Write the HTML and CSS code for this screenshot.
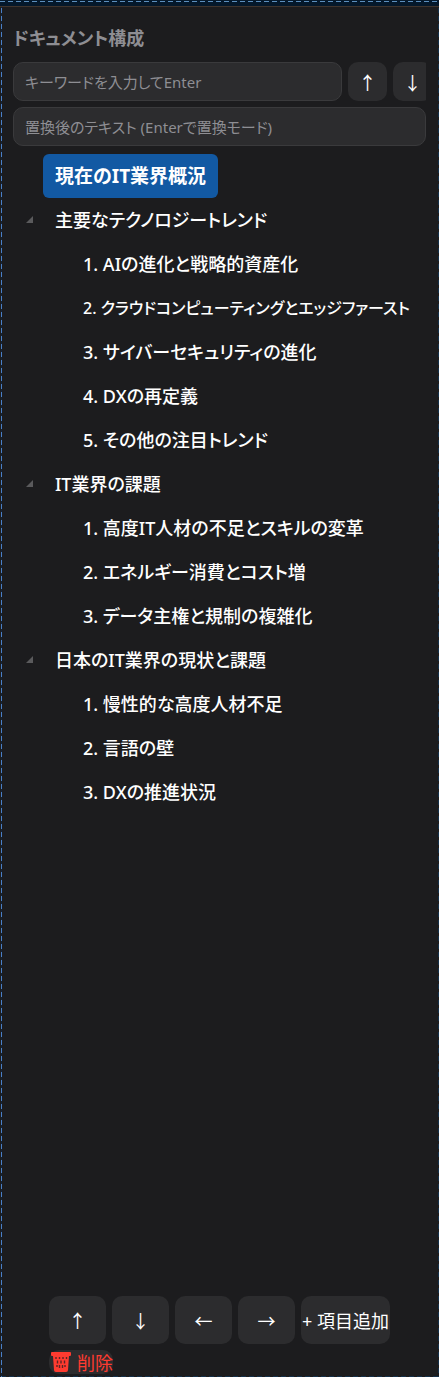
FILE: index.html
```
<!DOCTYPE html>
<html lang="ja">
<head>
    <meta charset="UTF-8">
    <title>ドキュメント構成</title>
    <meta name="viewport" content="width=device-width,initial-scale=1.0">
    <link rel="stylesheet" href="styles.css">
</head>
<body>
<div class="panel">
    <h2 class="title">ドキュメント構成</h2>
    <div class="search">
        <input type="text" class="keyword" placeholder="キーワードを入力してEnter" aria-label="キーワード">
        <button type="button" class="btn" aria-label="前へ">↑</button>
        <button type="button" class="btn" aria-label="次へ">↓</button>
    </div>
    <input type="text" class="replace" placeholder="置換後のテキスト (Enterで置換モード)" aria-label="置換後のテキスト">
    <ul class="tree">
        <li><span class="item selected">現在のIT業界概況</span></li>
        <li class="open">
            <span class="item">主要なテクノロジートレンド</span>
            <ul>
                <li><span class="item">1. AIの進化と戦略的資産化</span></li>
                <li><span class="item long">2. クラウドコンピューティングとエッジファースト</span></li>
                <li><span class="item">3. サイバーセキュリティの進化</span></li>
                <li><span class="item">4. DXの再定義</span></li>
                <li><span class="item">5. その他の注目トレンド</span></li>
            </ul>
        </li>
        <li class="open">
            <span class="item">IT業界の課題</span>
            <ul>
                <li><span class="item">1. 高度IT人材の不足とスキルの変革</span></li>
                <li><span class="item">2. エネルギー消費とコスト増</span></li>
                <li><span class="item">3. データ主権と規制の複雑化</span></li>
            </ul>
        </li>
        <li class="open">
            <span class="item">日本のIT業界の現状と課題</span>
            <ul>
                <li><span class="item">1. 慢性的な高度人材不足</span></li>
                <li><span class="item">2. 言語の壁</span></li>
                <li><span class="item">3. DXの推進状況</span></li>
            </ul>
        </li>
    </ul>
    <div class="tools">
        <button type="button" class="btn" aria-label="上へ移動">↑</button>
        <button type="button" class="btn" aria-label="下へ移動">↓</button>
        <button type="button" class="btn" aria-label="左へ移動">←</button>
        <button type="button" class="btn" aria-label="右へ移動">→</button>
        <button type="button" class="btn add">+ 項目追加</button>
        <button type="button" class="btn delete">
            <svg width="20" height="20" viewBox="0 0 20 20" aria-hidden="true">
                <path d="M1 0h18q1 0 1 1v2q0 1-1 1h-1l-1 14q0 2-2 2H5q-2 0-2-2L2 4H1Q0 4 0 3V1q0-1 1-1z" fill="#ff3b30"/>
                <path d="M5 5v2M8.500 5v2M12 5v2M15.500 5v2M6.500 8.500v3M10 8.500v3M13.500 8.500v3M6 13v2M8.500 13v3M11.500 13v3M14 13v2" stroke="#5c2424" stroke-width="1.400"/>
            </svg>
            削除
        </button>
    </div>
</div>
</body>
</html>
```

FILE: styles.css
```
* {
    margin: 0;
    padding: 0;
    box-sizing: border-box;
}

body {
    background: #1c1c1e;
    color: #fff;
    font-family: "Noto Sans", "Noto Sans CJK JP", sans-serif;
    font-feature-settings: "palt";
    font-size: 18px;
}

.panel {
    position: relative;
    display: flex;
    flex-direction: column;
    min-height: 100vh;
    padding: 24px 13px 3px;
    overflow: hidden;
}

/* ドロップ領域の枠 */
.panel:before {
    content: "";
    position: absolute;
    top: 0;
    right: 0;
    bottom: 0;
    left: 1px;
    background:
        repeating-linear-gradient(180deg, #4a80c8 0 5px, #142438 5px 8px) left / 1px 100% no-repeat,
        repeating-linear-gradient(180deg, #14304a 0 5px, #1c1c1e 5px 8px) right / 1px 100% no-repeat,
        repeating-linear-gradient(90deg, #14304a 0 5px, #1c1c1e 5px 8px) bottom / 100% 1px no-repeat;
    pointer-events: none;
}

.panel:after {
    content: "";
    position: absolute;
    top: 0;
    left: 0;
    width: 100%;
    height: 6px;
    background: repeating-linear-gradient(90deg, #5c8fbd 0 5px, #04182b 5px 8px) 0 1px / 100% 1px no-repeat #04182b;
    border-bottom: 1px solid #40342c;
}

.title {
    height: 38px;
    line-height: 28px;
    font-size: 18px;
    color: #8e8e93;
}

.search {
    display: flex;
    gap: 6px;
    overflow: hidden;
}

input {
    height: 39px;
    padding: 0 11px;
    border: 1px solid #3a3a3c;
    border-radius: 10px;
    background: #2c2c2e;
    color: #fff;
    font: inherit;
    font-size: 15px;
    font-feature-settings: inherit;
}

input::placeholder {
    color: #8e8e93;
    opacity: 1;
}

.keyword {
    flex: 1 0 329px;
    min-width: 0;
}

.replace {
    width: 100%;
    margin-top: 6px;
}

.btn {
    flex: none;
    border: 0;
    border-radius: 10px;
    background: #2c2c2e;
    color: #fff;
    font: inherit;
    font-feature-settings: inherit;
    white-space: nowrap;
}

.search .btn {
    width: 39px;
    height: 39px;
}

.tree {
    flex: 1;
    margin-top: 8px;
    padding-left: 30px;
}

.tree ul {
    padding-left: 28px;
}

.tree li {
    position: relative;
    list-style: none;
}

.item {
    display: block;
    width: fit-content;
    height: 44px;
    padding: 0 12px;
    border-radius: 6px;
    line-height: 44px;
    font-weight: 500;
    white-space: nowrap;
}

.long {
    font-size: 16px;
}

.selected {
    background: #1259a3;
    font-size: 19px;
    font-weight: 700;
}

.open:before {
    content: "";
    position: absolute;
    top: 18px;
    left: -17px;
    border-left: 7px solid transparent;
    border-bottom: 7px solid #5a5a5c;
}

.tools {
    display: flex;
    flex-wrap: wrap;
    gap: 6px;
    padding: 0 30px 0 36px;
}

.tools .btn {
    width: 57px;
    height: 48px;
}

.tools .add {
    width: 89px;
}

.tools .delete {
    display: flex;
    align-items: center;
    gap: 6px;
    width: auto;
    height: 24px;
    padding: 0 0 0 2px;
    color: #ff3b30;
}
```
